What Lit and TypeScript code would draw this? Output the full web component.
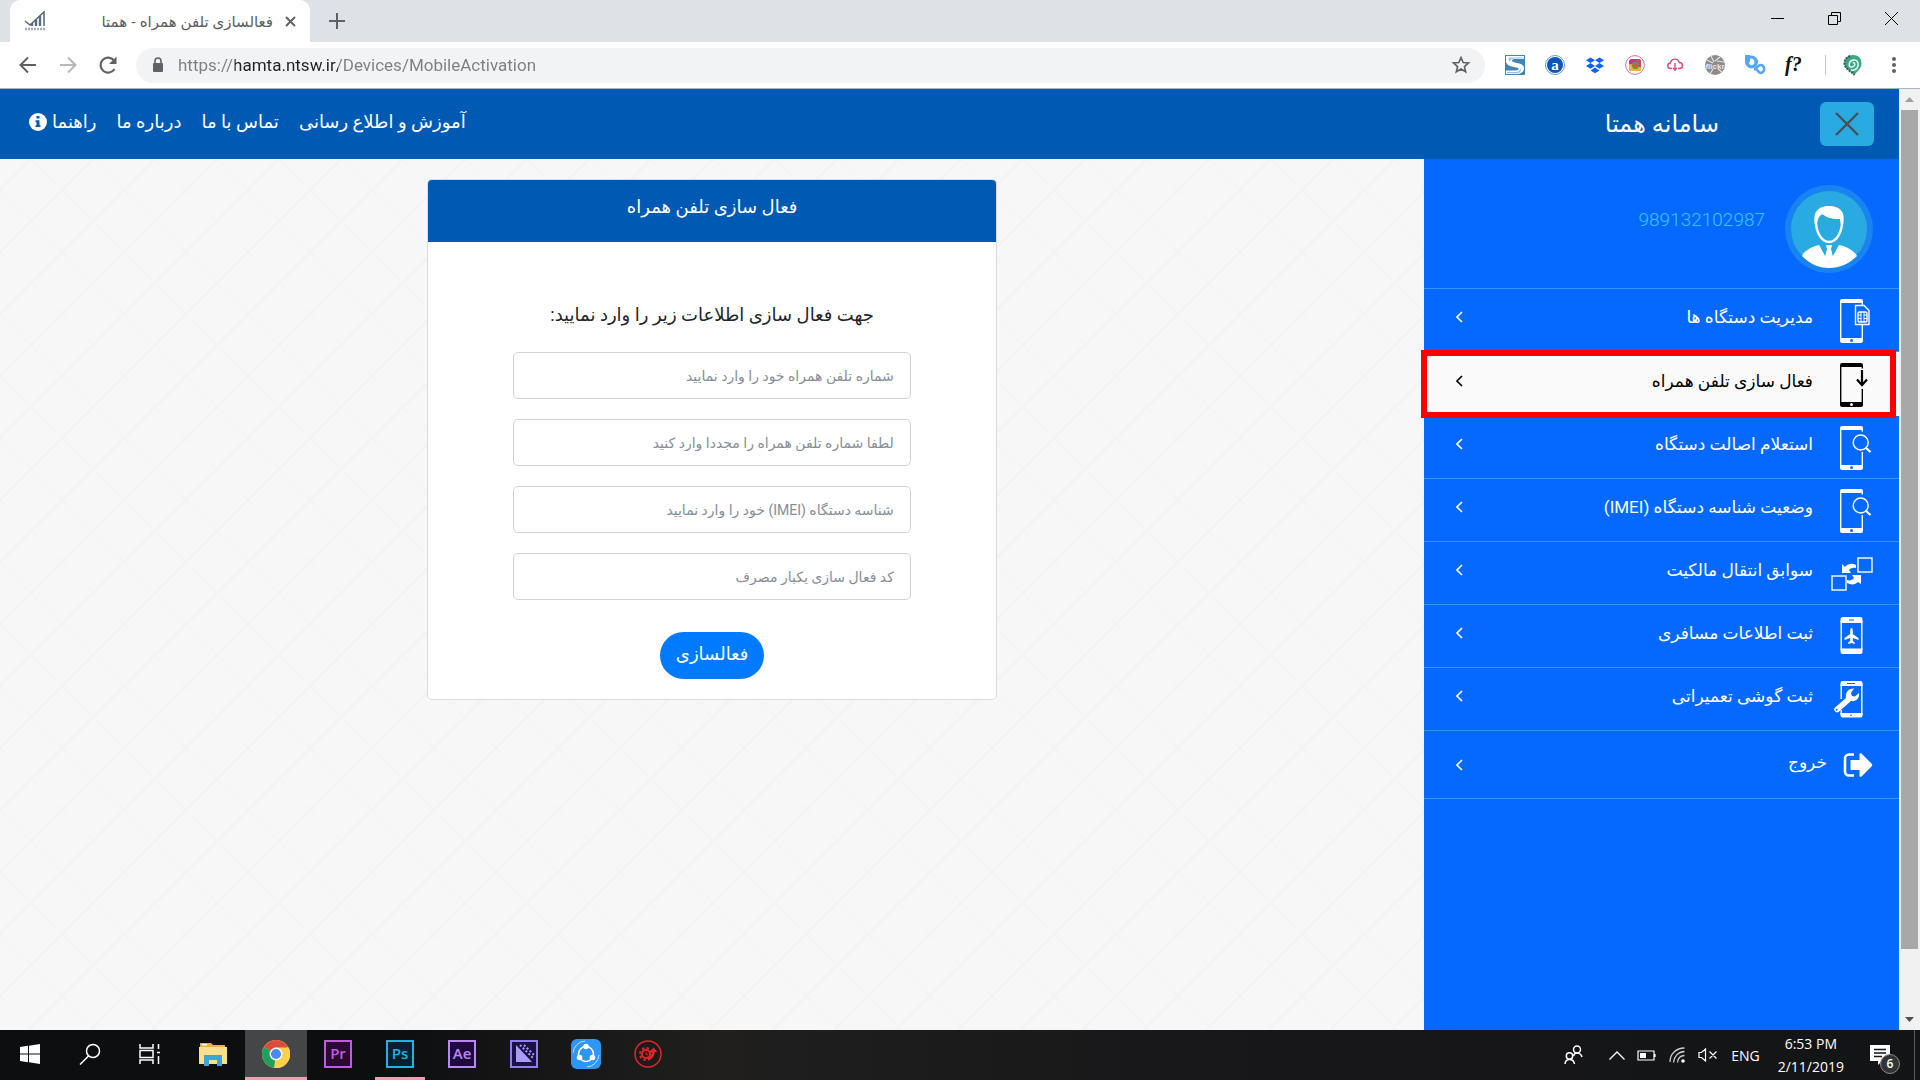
import { LitElement, html, svg, css, TemplateResult, SVGTemplateResult } from "lit";
import { customElement, state } from "lit/decorators.js";
import { classMap } from "lit/directives/class-map.js";

/* ---------- Drawings for the browser bar ---------- */

const stroke = (d: string, size: number, width = 2, box = 24) => html`
  <svg width=${size} height=${size} viewBox="0 0 ${box} ${box}" fill="none" stroke="currentColor"
    stroke-width=${width} aria-hidden="true"><path d=${d} /></svg>`;

const favicon = html`
  <svg width="22" height="20" viewBox="0 0 22 20" fill="none" stroke="#5a6b7b" aria-hidden="true">
    <path d="M1 10l5 4L20 1v14" stroke-width="1.600" />
    <path d="M8 15v-3M12 15V9M16 15V5" stroke-width="2.400" />
    <path d="M1 18h20" stroke="#a3adb8" stroke-width="2.400" stroke-dasharray="2 1" />
  </svg>`;

const lock = html`
  <svg width="12" height="16" viewBox="0 0 12 16" aria-hidden="true">
    <rect x="1" y="6" width="10" height="9" rx="1" fill="#5f6368" />
    <path d="M3 7V4a3 3 0 0 1 6 0v3" fill="none" stroke="#5f6368" stroke-width="1.600" />
  </svg>`;

const extensions: { name: string; art: SVGTemplateResult }[] = [
  {
    name: "S",
    art: svg`<rect width="20" height="20" fill="#4583b2"/>
      <path d="M1 1h18v3H11C8 4 7 4.500 7 5.500S8 7 11 7.700c5 1 8 2 8 5.300 0 4-3 6-8 6H1v-3.500h8c3 0 4.500-.5 4.500-1.500S12 12.500 9 12C4 11 1 9.500 1 6z" fill="#fff"/>
      <path d="M4 2.500h14.500v1H10C6 3.500 5 5 5.500 6.500 3.500 6 3 4 4 2.500zM15 12.500c1 2.500-1 4.500-6 4.500H2v1.300h9c5 0 6-3 4-5.800z" fill="#9fc0d8"/>`,
  },
  {
    name: "a",
    art: svg`<circle cx="10" cy="10" r="9.500" fill="#fff" stroke="#5d9be0"/><circle cx="10" cy="10" r="8" fill="#0d55b8"/>
      <text x="10" y="15" text-anchor="middle" font-size="15" font-weight="bold" font-family="Liberation Serif, serif" fill="#fff">a</text>`,
  },
  {
    name: "Dropbox",
    art: svg`<path fill="#0d62fe" d="M5.500 2.500l4.500 2.800-4.500 2.800L1 5.300zM14.500 2.500L19 5.300l-4.500 2.800L10 5.300zM5.500 8.100l4.500 2.800-4.500 2.800L1 10.900zM14.500 8.100l4.500 2.800-4.500 2.800-4.500-2.800zM10 12.600l4.500 2.800-4.500 2.800-4.500-2.800z"/>`,
  },
  {
    name: "Instagram",
    art: svg`<circle cx="10" cy="10" r="9.400" fill="#fff" stroke="#d0708f"/>
      <rect x="4" y="4" width="12" height="12" rx="2.500" fill="#b9379a"/><path d="M4 9l12 1v3.500a2.500 2.500 0 0 1-2.500 2.500h-7A2.500 2.500 0 0 1 4 13.500z" fill="#f5b52c"/>
      <path d="M10 4h3.500A2.500 2.500 0 0 1 16 6.500V12h-3z" fill="#d63e6b"/><circle cx="10.500" cy="10.500" r="3" fill="#e4572e" stroke="#5aa34c" stroke-width="1.300"/>`,
  },
  {
    name: "Cloud download",
    art: svg`<path fill="none" stroke="#ec3f86" stroke-width="1.400" d="M7 13.500H5.500a2.500 2.500 0 0 1 0-5.500 4.500 4.500 0 0 1 8.800-.5 3 3 0 0 1 .2 6H13M10 8v7M8 13l2 2 2-2"/>`,
  },
  {
    name: "flickr",
    art: svg`<circle cx="10" cy="10" r="10" fill="#8b8b8b"/>
      <path d="M6 1l3 6M15 2l-5 4M19 7l-7-1M2 5l6 3M5 19l3-5M17 17l-4-3" stroke="#e4e4e4" stroke-width="1.200"/>
      <text x="10" y="14" text-anchor="middle" font-size="8" font-weight="bold" font-family="Liberation Sans, sans-serif" fill="#e8e8e8">flickr</text>`,
  },
  {
    name: "Links",
    art: svg`<circle cx="6.500" cy="7" r="4.700" fill="none" stroke="#55a7f5" stroke-width="3.600"/><path fill="#55a7f5" d="M0 0h5v8H0z"/>
      <path fill="#fff" d="M5.500 3.500h2v4h2l-3 3-3-3h2z"/>
      <path fill="none" stroke="#55a7f5" stroke-width="2.600" d="M9 14.500c3 0 3-4.500 6.500-4.500 3 0 4 3 3.500 5s-2.500 3.500-4.500 2.500-2-3.500-4.500-3.500"/>`,
  },
  {
    name: "Font",
    art: svg`<text x="0" y="16" font-size="20" font-style="italic" font-weight="bold" font-family="Liberation Serif, serif" fill="#111">f?</text>`,
  },
];

const profile = html`
  <svg width="20" height="22" viewBox="0 0 20 22" aria-hidden="true">
    <path d="M10 1c5 0 8.500 3.500 8.500 8 0 6-5 8.500-7 12C8 17 1.500 15 1.500 9c0-4.500 3.500-8 8.500-8z" fill="#3aa981" />
    <path d="M7 2C3 4 1.500 6 1.500 9c0 6 6.500 8 10 12" fill="none" stroke="#2d5560" stroke-width="2" stroke-dasharray="2 1" />
    <path d="M8 16c5 1 8-3 7-7s-7-4-8.500 0 2.500 5 4.500 3 0-3.500-1-3" fill="none" stroke="#e8f6f0" stroke-width="1.500" />
  </svg>`;

/* ---------- Drawings for the side menu ---------- */

const phoneEnds = svg`
  <path fill="currentColor" d="M9 4a2 2 0 0 1 2-2h19a2 2 0 0 1 2 2v2H9zM9 41h23v3a2 2 0 0 1-2 2H11a2 2 0 0 1-2-2z" stroke="none"/>
  <circle cx="20.500" cy="43.500" r="1.500" fill="var(--row)" stroke="none"/>`;

const magnifierPhone = svg`${phoneEnds}
  <path d="M9.700 5v37M31.300 5v2.500M31.300 28v14"/><circle cx="29.700" cy="18.500" r="7.500"/><path stroke-width="2.200" d="M35 24l4.500 4"/>`;

interface MenuEntry {
  text: string;
  art: SVGTemplateResult;
  active?: boolean;
  exit?: boolean;
}

const menu: MenuEntry[] = [
  {
    text: "مدیریت دستگاه ها",
    art: svg`${phoneEnds}<path d="M9.700 5v37M31.300 5v3M31.300 28v14"/>
      <path d="M24.500 8.500h8.500l5 5v14h-13.500z"/><rect x="27" y="15" width="9" height="10" rx="1.500"/>
      <path stroke-width="1" d="M27 18h3v7M27 21.500h3M36 18h-3v7M36 21.500h-3M30 15v3M33 15v3"/>`,
  },
  {
    text: "فعال سازی تلفن همراه",
    active: true,
    art: svg`${phoneEnds}<path d="M9.700 5v37M31.300 5v2.500M31.300 28v14"/>
      <path stroke-width="2.200" d="M31 9v15M26 18.500l5 5.500 5-5.500"/>`,
  },
  { text: "استعلام اصالت دستگاه", art: magnifierPhone },
  { text: "وضعیت شناسه دستگاه (IMEI)", art: magnifierPhone },
  {
    text: "سوابق انتقال مالکیت",
    art: svg`<rect x="1" y="26" width="14" height="14"/><rect x="27" y="8" width="14" height="14"/>
      <path fill="currentColor" stroke="none" d="M11 14l3 3c3-3.500 7-4 11-2v3c-3-.5-5 0-7 2l2 3h-9zM30 25v9l-3-2c-3 3-7 3-11 1v-3c3 1 5 0 7-2l-2-3z"/>`,
  },
  {
    text: "ثبت اطلاعات مسافری",
    art: svg`<path fill="currentColor" stroke="none" d="M9.500 6a2 2 0 0 1 2-2h18a2 2 0 0 1 2 2v4h-22zM9.500 35.500h22V39a2 2 0 0 1-2 2h-18a2 2 0 0 1-2-2z"/>
      <path d="M10.200 8v29M30.800 8v29"/><path d="M18 7h5" stroke="var(--row)" stroke-width="1"/>
      <path fill="currentColor" stroke="none" d="M20.500 15c1 0 1.300 1.500 1.300 3v3l5.700 4v2l-5.700-2v3l2 1.500v1.500l-3.300-1-3.300 1v-1.500l2-1.500v-3l-5.700 2v-2l5.700-4v-3c0-1.500.3-3 1.300-3z"/>`,
  },
  {
    text: "ثبت گوشی تعمیراتی",
    art: svg`<path fill="currentColor" stroke="none" d="M9.500 7a2 2 0 0 1 2-2h18a2 2 0 0 1 2 2v3h-22zM9.500 37h22v2.500a2 2 0 0 1-2 2h-18a2 2 0 0 1-2-2z"/>
      <path d="M10.200 8v15M10.200 34v5M30.800 8v31"/><path d="M16 7.500h8M19 39.200h2" stroke="var(--row)" stroke-width="1"/>
      <path fill="currentColor" stroke="none" d="M23 12.500l-3 4.500 1 3 3 .5 4-3.500c1 5-3 9-8 8L7.500 36c-2 1.500-5.500-1.500-4-4L15 22c-1-6 3-10 8-9.500z"/>
      <circle cx="5.700" cy="33.800" r="1" fill="var(--row)" stroke="none"/>`,
  },
  {
    text: "خروج",
    exit: true,
    art: svg`<path fill="none" stroke-width="2.600" d="M13 12.500H8a4 4 0 0 0-4 4v13a4 4 0 0 0 4 4h5"/>
      <path fill="currentColor" stroke="none" d="M9.500 18h9v-5.500c0-1.500 1-1.500 2-1l10 10c1 1 1 2 0 3l-10 10c-1 .7-2 .5-2-1V28h-9z"/>`,
  },
];

const avatar = html`
  <svg width="88" height="88" viewBox="0 0 88 88" aria-hidden="true">
    <circle cx="44" cy="44" r="44" fill="#1a83f2" /><circle cx="44" cy="44" r="38" fill="#29abe2" />
    <path fill="#fff" d="M17 71c2-6 12-10 17-11l10 18 10-18c6 1 15 5 18 11-8 8-17 12-28 12S25 79 17 71z" />
    <path fill="#fff" d="M34 60l7 14-1 4-4-3zM54 60l-7 14 1 4 4-3z" />
    <path fill="#fff" d="M41 60h6l-1 4 2 8-4 6-4-6 2-8z" />
    <path fill="#29abe2" stroke="#fff" stroke-width="2.400" d="M31 37c0 9 5 20 13 20s13-11 13-20l-1-9H32z" />
    <path fill="#fff" d="M30 40c-2-9 0-19 14-19 11 0 17 6 14 19h-2l-1-6c-10 0-14-2-18-5-2 2-5 4-5 11z" />
  </svg>`;

/* ---------- Drawings for the taskbar ---------- */

const adobe = (letters: string, edge: string, fill: string) => html`
  <svg width="28" height="28" viewBox="0 0 28 28" aria-hidden="true">
    <rect x="1" y="1" width="26" height="26" fill=${fill} stroke=${edge} stroke-width="2" />
    <text x="14" y="19" text-anchor="middle" font-size="15" font-weight="600" font-family="Open Sans, sans-serif" fill=${edge}>${letters}</text>
  </svg>`;

const taskbarApps: { name: string; art: TemplateResult; open?: boolean; current?: boolean }[] = [
  {
    name: "Start",
    art: html`<svg width="20" height="20" viewBox="0 0 20 20" fill="#fff" aria-hidden="true">
      <path d="M0 3l8-1.200V9.500H0zM9 1.700L20 0v9.500H9zM0 10.500h8v7.700L0 17zM9 10.500h11V20L9 18.300z" /></svg>`,
  },
  {
    name: "Search",
    art: html`<svg width="22" height="22" viewBox="0 0 22 22" fill="none" stroke="#fff" stroke-width="1.500" aria-hidden="true">
      <circle cx="14" cy="8" r="6.500" /><path d="M9.500 13L1 21.500" /></svg>`,
  },
  {
    name: "Task view",
    art: html`<svg width="22" height="20" viewBox="0 0 22 20" fill="none" stroke="#fff" stroke-width="1.500" aria-hidden="true">
      <path d="M1 0v4h13V0M1 20v-4h13v4M1 6.500h13v7H1zM19.500 0v5M19.500 12v8M18 8.500h3" /></svg>`,
  },
  {
    name: "Explorer",
    art: html`<svg width="28" height="24" viewBox="0 0 28 24" aria-hidden="true">
      <path fill="#e9b33b" d="M1 1h11l2 2h12v4H1z" /><path fill="#fbe08c" d="M0 5h28v17H0z" /><path fill="#fff" d="M3 2h5v1.500H3z" />
      <path fill="#3fa3d8" d="M5 13h18v11h-5v-6h-8v6H5z" /></svg>`,
  },
  {
    name: "Chrome",
    open: true,
    current: true,
    art: html`<svg width="28" height="28" viewBox="0 0 28 28" aria-hidden="true">
      <circle cx="14" cy="14" r="14" fill="#fdd04b" /><path fill="#dd4b3e" d="M14 14L1.900 7a14 14 0 0 1 24.200 0z" />
      <path fill="#1fa15d" d="M14 14l-2 13.900A14 14 0 0 1 1.900 7z" /><path fill="#fdd04b" d="M14 7.500h12.500A14 14 0 0 1 12.500 28l6-10z" />
      <circle cx="14" cy="14" r="6.500" fill="#fff" /><circle cx="14" cy="14" r="5" fill="#4a8af4" /></svg>`,
  },
  { name: "Premiere", art: adobe("Pr", "#c25be0", "#2a0a33") },
  { name: "Photoshop", open: true, art: adobe("Ps", "#1fb4e0", "#04202c") },
  { name: "After Effects", art: adobe("Ae", "#b78af0", "#200a3d") },
  {
    name: "Media Encoder",
    art: html`<svg width="28" height="28" viewBox="0 0 28 28" aria-hidden="true">
      <rect x="1" y="1" width="26" height="26" fill="#1a1147" stroke="#8f80ee" stroke-width="2" />
      <path fill="#a99cf7" d="M6 5l16 17H6z" /><path d="M10 5l14 14M14 5l10 10" stroke="#a99cf7" stroke-width="2" stroke-dasharray="2 2" /></svg>`,
  },
  {
    name: "Share",
    art: html`<svg width="30" height="30" viewBox="0 0 30 30" aria-hidden="true">
      <rect width="30" height="30" rx="6" fill="#2f96f8" /><circle cx="15" cy="15" r="7.500" fill="none" stroke="#fff" stroke-width="1.600" />
      <path d="M2 14A13 13 0 0 1 14 2M28 16a13 13 0 0 1-12 12" fill="none" stroke="#bfe0ff" />
      <circle cx="15" cy="7.500" r="2.800" fill="#fff" /><circle cx="8.500" cy="18.500" r="2.800" fill="#fff" /><circle cx="21.500" cy="18.500" r="2.800" fill="#fff" /></svg>`,
  },
  {
    name: "Red tool",
    art: html`<svg width="28" height="28" viewBox="0 0 28 28" fill="none" stroke="#e0262a" aria-hidden="true">
      <circle cx="14" cy="14" r="13" stroke-width="1.500" /><circle cx="12" cy="14" r="4" stroke-width="2" />
      <circle cx="12" cy="14" r="6" stroke-width="2" stroke-dasharray="2.500 2.200" /><path d="M12 12v2l2 1" stroke-width="1.200" />
      <path d="M14 19c4-1 5.500-4 5.500-8" stroke-width="2.600" /><path d="M15.500 12l4-4.500 4 4.500z" fill="#e0262a" stroke="none" /></svg>`,
  },
];

const fields = [
  "شماره تلفن همراه خود را وارد نمایید",
  "لطفا شماره تلفن همراه را مجددا وارد کنید",
  "شناسه دستگاه (IMEI) خود را وارد نمایید",
  "کد فعال سازی یکبار مصرف",
];

const shared = css`
  * { box-sizing: border-box; }
  a { color: inherit; text-decoration: none; }
  button { border: 0; padding: 0; background: none; color: inherit; font: inherit; display: flex; align-items: center; justify-content: center; }
  svg { display: block; flex: none; }
`;

@customElement("browser-bar")
export class BrowserBar extends LitElement {
  static styles = [shared, css`
    :host { display: block; color: #5f6368; font-family: "Open Sans", "DejaVu Sans", sans-serif; border-bottom: 1px solid #a9b4c2; }
    .strip { display: flex; align-items: stretch; height: 42px; background: #dee1e6; }
    .tab { display: flex; align-items: center; width: 300px; margin-left: 10px; padding: 0 14px; background: #fff; border-radius: 10px 10px 0 0; }
    .title { flex: 1; margin: 0 12px; direction: rtl; font-size: 15px; color: #5a5e62; white-space: nowrap; }
    .add { width: 54px; }
    .window { display: flex; margin-left: auto; color: #000; }
    .window button { width: 57px; height: 36px; }
    .bar { display: flex; align-items: center; height: 46px; padding: 0 16px; background: #fff; }
    .moves { display: flex; gap: 16px; }
    .moves button { width: 24px; height: 24px; }
    .off { opacity: 0.45; }
    .address { display: flex; flex: 1; align-items: center; gap: 14px; height: 35px; margin: 0 20px 0 16px; padding: 0 14px 0 16px; border-radius: 18px; background: #f1f3f4; }
    /* The host name is darker than the rest of the address. */
    .url {
      flex: 1; min-width: 0; border: 0; padding: 0; outline: 0; font: 17px/24px Roboto, sans-serif; color: transparent;
      background: linear-gradient(90deg, #7b7f83 57px, #202124 57px 160px, #7b7f83 160px); -webkit-background-clip: text; background-clip: text;
    }
    .extensions { display: flex; align-items: center; gap: 20px; }
    .divider { width: 1px; height: 20px; background: #c6c8cb; }
    .account { display: flex; align-items: center; gap: 21px; margin-left: 17px; }
    .extensions + .divider { margin-left: 20px; }
  `];

  render() {
    return html`
      <div class="strip">
        <div class="tab">
          ${favicon}
          <span class="title">فعالسازی تلفن همراه - همتا</span>
          <button aria-label="Close tab">${stroke("M1 1l9 9M10 1l-9 9", 11, 2, 11)}</button>
        </div>
        <button class="add" aria-label="New tab">${stroke("M8 0v16M0 8h16", 16, 2, 16)}</button>
        <div class="window">
          <button aria-label="Minimize">${stroke("M0 6.500h13", 13, 1, 13)}</button>
          <button aria-label="Restore">${stroke("M.5 3.500h9v9h-9zM3.500 3.500v-3h9v9h-3", 13, 1, 13)}</button>
          <button aria-label="Close">${stroke("M0 0l13 13M13 0L0 13", 13, 1, 13)}</button>
        </div>
      </div>
      <div class="bar">
        <div class="moves">
          <button aria-label="Back">${stroke("M20 12H5M12 4.500L4.500 12l7.500 7.500", 24)}</button>
          <button class="off" aria-label="Forward">${stroke("M4 12h15M12 4.500l7.500 7.500-7.500 7.500", 24)}</button>
          <button aria-label="Reload">
            <svg width="24" height="24" viewBox="0 0 24 24" aria-hidden="true">
              <path d="M18.500 16A7.500 7.500 0 1 1 18 7.500" fill="none" stroke="#5f6368" stroke-width="2.200" />
              <path d="M20.500 3.500V11H13z" fill="#5f6368" />
            </svg>
          </button>
        </div>
        <div class="address">
          ${lock}
          <input class="url" aria-label="Address" value="https://hamta.ntsw.ir/Devices/MobileActivation" />
          <button aria-label="Bookmark">${stroke("M12 3l2.600 6 6.400.600-4.900 4.300 1.500 6.300L12 16.800l-5.600 3.400 1.500-6.300L3 9.600 9.400 9z", 20)}</button>
        </div>
        <div class="extensions">
          ${extensions.map((e) => html`<button aria-label=${e.name}><svg width="20" height="20" viewBox="0 0 20 20" overflow="visible">${e.art}</svg></button>`)}
        </div>
        <span class="divider"></span>
        <div class="account">
          <button aria-label="Profile">${profile}</button>
          <button aria-label="Menu"><svg width="20" height="20" viewBox="0 0 20 20" fill="#5f6368">
            <circle cx="10" cy="4" r="2" /><circle cx="10" cy="10" r="2" /><circle cx="10" cy="16" r="2" /></svg></button>
        </div>
      </div>`;
  }
}

@customElement("side-menu")
export class SideMenu extends LitElement {
  static styles = [shared, css`
    :host { display: block; background: #0669ff; color: #fff; direction: rtl; }
    .user { display: flex; align-items: flex-start; gap: 20px; height: 130px; padding: 26px 26px 0; border-bottom: 1px solid #3a92ff; }
    .phone { margin-top: 24px; font: 300 19px/22px Roboto, sans-serif; color: #3cc4ff; }
    ul { list-style: none; margin: 0; padding: 0; }
    .row { --row: #0669ff; position: relative; display: flex; align-items: center; gap: 18px; height: 63px; padding: 0 26px 0 32px; border-bottom: 1px solid #3a92ff; font-size: 17px; line-height: 28px; }
    .active { --row: #fafafa; height: 64px; background: #fafafa; color: #000; border-bottom-color: #fafafa; }
    .exit { height: 68px; gap: 14px; }
    /* Highlight frame drawn over the edges of the neighbouring rows. */
    .active::after { content: ""; position: absolute; inset: -2px 3px -3px -3px; border: 6px solid #fe0000; z-index: 1; }
    .label { flex: 1; padding-bottom: 6px; }
    .arrow { margin-bottom: 6px; }
    .exit .arrow { margin-bottom: 0; }
    .art { width: 42px; height: 46px; fill: none; stroke: currentColor; stroke-width: 1.400; }
    .exit .art { width: 32px; }
  `];

  render() {
    return html`
      <div class="user">${avatar}<span class="phone">989132102987</span></div>
      <ul>
        ${menu.map((m) => html`
          <li>
            <a href="#" class=${classMap({ row: true, active: !!m.active, exit: !!m.exit })}>
              <svg class="art" viewBox=${m.exit ? "0 0 32 46" : "0 0 42 46"} aria-hidden="true">${m.art}</svg>
              <span class="label">${m.text}</span>
              <svg class="arrow" width="7" height="12" viewBox="0 0 7 12" fill="none" stroke="currentColor" stroke-width="1.600" aria-hidden="true"><path d="M6 1L1 6l5 5" /></svg>
            </a>
          </li>`)}
      </ul>`;
  }
}

@customElement("activation-card")
export class ActivationCard extends LitElement {
  static styles = [shared, css`
    :host { display: block; direction: rtl; background: #fff; border: 1px solid #dadcde; border-radius: 5px; overflow: hidden; color: #212529; }
    h1 { margin: 0; height: 62px; padding: 11px 0 0; background: #005ab4; color: #fff; font-size: 18px; line-height: 32px; font-weight: 400; text-align: center; }
    form { display: flex; flex-direction: column; align-items: center; padding: 57px 15% 20px; }
    p { margin: 0 0 21px; font-size: 18px; line-height: 32px; white-space: nowrap; }
    input { width: 100%; height: 47px; margin-bottom: 20px; padding: 0 16px; border: 1px solid #ced4da; border-radius: 5px; background: #fff; font: inherit; font-size: 14px; color: #495057; direction: rtl; outline: 0; }
    input::placeholder { color: #868e96; opacity: 1; }
    .send { width: 104px; height: 47px; margin-top: 12px; padding-bottom: 4px; border-radius: 24px; background: #007bff; color: #fff; font-size: 18px; }
  `];

  render() {
    return html`
      <h1>فعال سازی تلفن همراه</h1>
      <form @submit=${(e: Event) => e.preventDefault()}>
        <p>جهت فعال سازی اطلاعات زیر را وارد نمایید:</p>
        ${fields.map((f) => html`<input type="text" placeholder=${f} aria-label=${f} />`)}
        <button class="send">فعالسازی</button>
      </form>`;
  }
}

@customElement("task-bar")
export class TaskBar extends LitElement {
  static styles = [shared, css`
    :host { display: flex; justify-content: space-between; height: 50px; background: linear-gradient(90deg, #0d0e10, #0d0e10 20%, #201f1e 37%, #18181a 60%, #131416); color: #fff; font-family: "Open Sans", sans-serif; }
    .apps, .tray { display: flex; align-items: stretch; }
    .app { width: 62px; border-bottom: 3px solid transparent; border-top: 1px solid transparent; }
    .app:nth-child(-n + 3) { width: 60px; }
    .app:nth-child(4) { width: 65px; }
    .open { border-bottom-color: #f79aa9; }
    .open:not(.current) { background: linear-gradient(#f79aa9, #f79aa9) bottom / 50px 3px no-repeat border-box; border-bottom-color: transparent; }
    .current { background: #454647; }
    .tray { align-items: center; gap: 12px; padding-right: 5px; }
    .people { margin-right: 14px; }
    .lang { font-size: 14px; margin: 0 6px 0 1px; }
    .clock { font-size: 14px; line-height: 23px; text-align: center; }
    .notes { position: relative; margin: 0 2px 0 14px; padding: 0 10px 0 0; }
    .count { position: absolute; left: 10px; top: 9px; width: 20px; height: 20px; border: 1px solid #888; border-radius: 50%; background: #333436; font-size: 12px; font-weight: 600; line-height: 18px; text-align: center; }
    .edge { align-self: stretch; width: 1px; background: #5a5a5c; }
  `];

  render() {
    return html`
      <div class="apps">
        ${taskbarApps.map((a) => html`
          <button class=${classMap({ app: true, open: !!a.open, current: !!a.current })} aria-label=${a.name}>${a.art}</button>`)}
      </div>
      <div class="tray">
        <svg class="people" width="19" height="20" viewBox="0 0 19 20" fill="none" stroke="#fff" stroke-width="1.500" aria-hidden="true">
          <circle cx="13" cy="4.500" r="3.500" /><path d="M9.500 11c1-4 7-4 8.500 1" /><circle cx="5.500" cy="11" r="3.200" /><path d="M1 19c.5-6 8.500-6 9.500 0" />
        </svg>
        <svg width="16" height="9" viewBox="0 0 16 9" fill="none" stroke="#fff" stroke-width="1.300" aria-hidden="true"><path d="M.5 8.500L8 1l7.500 7.500" /></svg>
        <svg width="20" height="11" viewBox="0 0 20 11" fill="none" stroke="#fff" stroke-width="1.200" aria-hidden="true">
          <path d="M1 1h16v9H1zM18 4v3" /><path d="M3 3h6v5H3z" fill="#fff" stroke="none" />
        </svg>
        <svg width="17" height="16" viewBox="0 0 17 16" fill="none" stroke="#ccc" stroke-width="1.300" aria-hidden="true">
          <path d="M1 15C1 7 7 1 15.500 1M4.500 15.500C5 9.500 9 5 15.500 4.500M8.500 15.500c.5-4 3-7 7-7" /><circle cx="14" cy="14" r="1.800" fill="#fff" stroke="none" />
        </svg>
        <svg width="20" height="14" viewBox="0 0 20 14" fill="none" stroke="#fff" stroke-width="1.200" aria-hidden="true">
          <path d="M1 4.500h2.500L7.500 1v12L3.500 9.500H1zM11.500 3.500l7 7M18.500 3.500l-7 7" />
        </svg>
        <span class="lang">ENG</span>
        <div class="clock">6:53 PM<br />2/11/2019</div>
        <button class="notes" aria-label="Notifications">
          <svg width="20" height="20" viewBox="0 0 20 20" aria-hidden="true"><path d="M0 0h20v16h-8l-4 4v-4H0z" fill="#fff" /><path d="M4 4.500h12M4 8h12M4 11.500h8" stroke="#131416" stroke-width="1.300" /></svg>
          <span class="count">6</span>
        </button>
        <span class="edge"></span>
      </div>`;
  }
}

@customElement("app-root")
export class AppRoot extends LitElement {
  @state() private links = ["درباره ما", "تماس با ما", "آموزش و اطلاع رسانی"];

  static styles = [shared, css`
    :host { display: flex; flex-direction: column; min-height: 100vh; font-family: Roboto, "DejaVu Sans", sans-serif; }
    .view { display: flex; flex: 1; }
    .site { display: flex; flex: 1; flex-direction: column; min-width: 0; }
    header { display: grid; grid-template-columns: 3fr 1fr; height: 70px; background: #005ab4; color: #fff; }
    nav { display: flex; align-items: center; gap: 20px; padding: 0 29px 4px; font-size: 18px; line-height: 28px; white-space: nowrap; }
    .help { display: flex; align-items: center; gap: 5px; }
    .brand { display: flex; direction: rtl; align-items: center; gap: 101px; padding: 0 25px; font-size: 24px; line-height: 30px; }
    .close { width: 54px; height: 44px; border-radius: 6px; background: #29abe2; color: #4a4f55; }
    .body { display: grid; grid-template-columns: 3fr 1fr; flex: 1; }
    main {
      padding-top: 20px;
      background:
        linear-gradient(135deg, transparent 49%, #f3f3f3 49% 51%, transparent 51%) 31px 0 / 62px 62px,
        linear-gradient(45deg, transparent 49%, #f5f5f5 49% 51%, transparent 51%) 31px 0 / 62px 62px,
        #f7f7f7;
    }
    activation-card { width: 40%; margin: 0 auto; }
    .scroll { display: flex; flex-direction: column; align-items: center; width: 21px; background: #f1f1f1; }
    .scroll button { width: 21px; height: 21px; }
    .thumb { flex: 1; width: 17px; margin-bottom: 60px; background: #a8a8a8; }
  `];

  render() {
    return html`
      <browser-bar></browser-bar>
      <div class="view">
        <div class="site">
          <header>
            <nav>
              <a class="help" href="#">
                <svg width="18" height="18" viewBox="0 0 18 18" aria-hidden="true">
                  <circle cx="9" cy="9" r="9" fill="#fff" />
                  <path d="M7.500 3h3v2.600h-3zM6.500 7.200h4v5h1v1.800h-5v-1.800h1V9h-1z" fill="#005ab4" />
                </svg>
                <span>راهنما</span>
              </a>
              ${this.links.map((l) => html`<a href="#">${l}</a>`)}
            </nav>
            <div class="brand">
              <button class="close" aria-label="Close menu">${stroke("M1 1l22 22M23 1L1 23", 24, 2.4)}</button>
              <span>سامانه همتا</span>
            </div>
          </header>
          <div class="body">
            <main><activation-card></activation-card></main>
            <side-menu></side-menu>
          </div>
        </div>
        <div class="scroll">
          <button aria-label="Scroll up"><svg width="9" height="5" viewBox="0 0 9 5" fill="#a0a0a0"><path d="M0 5l4.500-5L9 5z" /></svg></button>
          <div class="thumb"></div>
          <button aria-label="Scroll down"><svg width="9" height="5" viewBox="0 0 9 5" fill="#505050"><path d="M0 0l4.500 5L9 0z" /></svg></button>
        </div>
      </div>
      <task-bar></task-bar>`;
  }
}
